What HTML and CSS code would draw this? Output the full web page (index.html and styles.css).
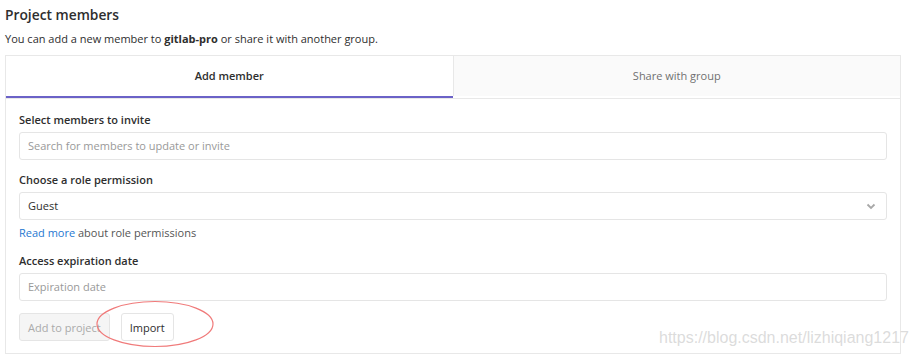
FILE: index.html
```html
<!DOCTYPE html>
<html>
    <head>
        <title>Project members</title>
        <link rel="stylesheet" href="styles.css">
    </head>
    <body>
        <h3 class="title">Project members</h3>
        <p class="intro">You can add a new member to <strong>gitlab-pro</strong> or share it with another group.</p>
        <div class="panel">
            <ul class="tabs">
                <li class="tab active">Add member</li>
                <li class="tab">Share with group</li>
            </ul>
            <form class="panel-body">
                <div class="group">
                    <label>Select members to invite</label>
                    <div class="field placeholder">Search for members to update or invite</div>
                </div>
                <div class="group">
                    <label>Choose a role permission</label>
                    <div class="field select">
                        <span>Guest</span>
                        <svg class="chevron" width="10" height="7" viewBox="0 0 10 7">
                            <path d="M1.5 1.5 L5 5 L8.5 1.5" fill="none" stroke="#a8a8a8" stroke-width="1.8"/>
                        </svg>
                    </div>
                    <div class="help"><a href="#">Read more</a> about role permissions</div>
                </div>
                <div class="group">
                    <label>Access expiration date</label>
                    <div class="field placeholder">Expiration date</div>
                </div>
                <div class="actions">
                    <button type="button" class="btn disabled">Add to project</button>
                    <button type="button" class="btn">Import</button>
                    <svg class="circle" width="122" height="50" viewBox="0 0 122 50">
                        <ellipse cx="61" cy="25" rx="58" ry="22.5" fill="none" stroke="#f07a7a" stroke-width="1.2"/>
                    </svg>
                </div>
            </form>
        </div>
        <div class="watermark">https://blog.csdn.net/lizhiqiang1217</div>
    </body>
</html>
```

FILE: styles.css
```css
body {
    margin: 0;
    padding: 0 17px 0 5px;
    color: #2e2e2e;
    font-family: "Open Sans", "Noto Sans", sans-serif;
    font-size: 11px;
    background: #fff;
    position: relative;
    height: 359px;
    overflow: hidden;
}
.title {
    margin: 0;
    padding-top: 5px;
    font-size: 13.8px;
    font-weight: 600;
    line-height: 20px;
}
.intro {
    margin: 5px 0 0;
    line-height: 18px;
}
.intro strong {
    font-weight: 700;
}
.panel {
    margin-top: 7px;
    border: 1px solid #e8e8e8;
}
.tabs {
    display: flex;
    margin: 0;
    padding: 0;
    list-style: none;
    border-bottom: 1px solid #e8e8e8;
}
.tab {
    flex: 1;
    height: 40px;
    line-height: 40px;
    text-align: center;
    color: #707070;
    background: #fafafa;
    border-left: 1px solid #e8e8e8;
}
.tab.active {
    color: #2e2e2e;
    font-weight: 600;
    background: #fff;
    border-left: none;
    border-bottom: 2px solid #6b62c7;
}
.panel-body {
    padding: 13px 13px 12px;
    margin: 0;
}
.group {
    margin-bottom: 12px;
}
label {
    display: block;
    font-weight: 600;
    line-height: 16px;
    margin-bottom: 4px;
}
.field {
    height: 26px;
    line-height: 26px;
    border: 1px solid #e5e5e5;
    border-radius: 3px;
    padding: 0 8px;
}
.placeholder {
    color: #999;
}
.select {
    display: flex;
    justify-content: space-between;
    align-items: center;
}
.chevron {
    margin-right: 2px;
}
.help {
    margin-top: 5px;
    line-height: 16px;
    color: #555;
}
.help a {
    color: #1f78d1;
    text-decoration: none;
}
.actions {
    display: flex;
    gap: 11px;
    position: relative;
}
.btn {
    height: 28px;
    padding: 0 8px;
    font: inherit;
    color: #2e2e2e;
    background: #fff;
    border: 1px solid #e5e5e5;
    border-radius: 3px;
}
.btn.disabled {
    color: #aaa;
    background: #f5f5f5;
}
.circle {
    position: absolute;
    left: 75px;
    top: -14px;
}
.watermark {
    position: absolute;
    left: 659px;
    top: 329px;
    font-family: "Liberation Sans", Arial, sans-serif;
    font-size: 16px;
    color: rgba(190, 190, 190, 0.55);
    white-space: nowrap;
}
```
